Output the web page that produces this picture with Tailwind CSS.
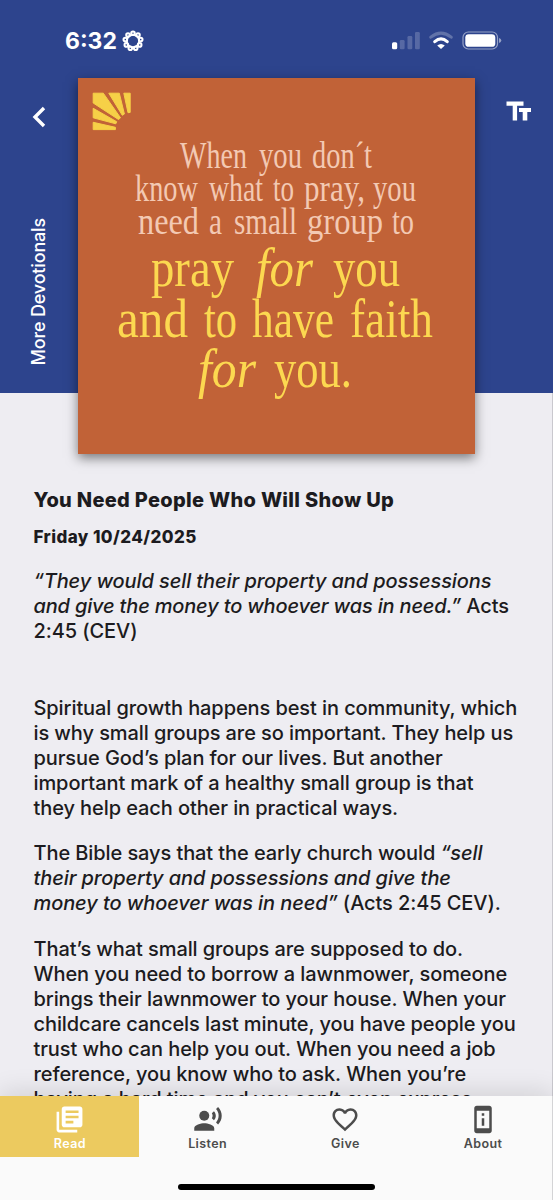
<!DOCTYPE html>
<html lang="en">
<head>
    <meta charset="UTF-8">
    <meta name="viewport" content="width=device-width, initial-scale=1.0">
    <title>Daily Devotional</title>
    <script src="https://cdn.jsdelivr.net/npm/@tailwindcss/browser@4"></script>
</head>
<body class="bg-[#eeedf2] font-['Inter',sans-serif] text-[#1c1b20]">
    <div class="relative w-full h-[1200px] overflow-hidden flex flex-col">

        <!-- Header -->
        <header class="bg-[#2d448d] h-[393px] shrink-0">
            <!-- Status bar -->
            <div class="h-[78px] pt-1 pl-[65px] pr-[51px] flex items-center justify-between text-white">
                <div class="flex items-center gap-[5px]">
                    <span class="text-[23px] leading-none font-bold">6:32</span>
                    <svg class="w-[22px] h-[22px]" viewBox="0 0 22 22" fill="none" stroke="#fff" stroke-width="2">
                        <circle cx="11" cy="11" r="6.2" />
                        <g stroke-width="2">
                            <circle cx="11" cy="3.2" r="1.8" />
                            <circle cx="16" cy="5" r="1.8" />
                            <circle cx="18.7" cy="9.6" r="1.8" />
                            <circle cx="17.7" cy="14.9" r="1.8" />
                            <circle cx="13.7" cy="18.3" r="1.8" />
                            <circle cx="8.3" cy="18.3" r="1.8" />
                            <circle cx="4.3" cy="14.9" r="1.8" />
                            <circle cx="3.3" cy="9.6" r="1.8" />
                            <circle cx="6" cy="5" r="1.8" />
                        </g>
                    </svg>
                </div>
                <svg class="w-[112px] h-[20px]" viewBox="0 0 112 20" fill="#fff">
                    <rect x="2" y="11.2" width="5.2" height="7" rx="1.5" />
                    <g opacity=".2">
                        <rect x="9.8" y="9" width="4.8" height="9.2" rx="1.3" />
                        <rect x="17.5" y="5" width="4.8" height="13.2" rx="1.3" />
                        <rect x="25" y="1" width="4.8" height="17.2" rx="1.3" />
                    </g>
                    <path d="M40.8 6.2 Q51 -2 61.2 6.2" fill="none" stroke="#fff" stroke-opacity=".25" stroke-width="3" stroke-linecap="round" />
                    <path d="M44.8 10.6 Q51 5.2 57.2 10.6" fill="none" stroke="#fff" stroke-width="3.2" stroke-linecap="round" />
                    <path d="M47.2 14.4 Q51 11.4 54.8 14.4 L51 18Z" />
                    <rect x="73" y="1" width="34.5" height="17" rx="5.3" fill="none" stroke="#fff" stroke-opacity=".5" stroke-width="1.2" />
                    <rect x="75.3" y="3.2" width="30" height="12.6" rx="3.4" />
                    <path d="M109 7 Q111.3 7.8 111.3 9.5 T109 12Z" opacity=".5" />
                </svg>
            </div>

            <div class="grid grid-cols-[78px_397px_1fr]">
                <!-- Back and more devotionals -->
                <div class="h-[315px] flex flex-col items-center justify-between pt-[28px] pb-[28px] text-white">
                    <svg class="w-[14px] h-[22px]" viewBox="0 0 14 22" fill="none" stroke="#fff" stroke-width="3.4">
                        <path d="M12 2 L3 11 L12 20" />
                    </svg>
                    <span class="[writing-mode:vertical-rl] rotate-180 whitespace-nowrap text-[18px] leading-[20px] font-medium tracking-[-0.17px]">More Devotionals</span>
                </div>

                <!-- Devotional artwork -->
                <div class="relative z-10 h-[375.5px] bg-[#c16237] shadow-[0_4px_11px_rgba(0,0,0,0.5)]">
                    <svg class="w-[397px] h-[375px]" viewBox="78 78 397 375" font-family="'Liberation Serif', serif">
                        <g fill="#f6d047" stroke="#f6d047" stroke-width="1" stroke-linejoin="round">
                            <path d="M93.2 93.2 H103.3 L120.5 117.8 L118.5 119.5 L93.2 103Z" />
                            <path d="M108.8 93.2 H119.3 L124.4 114 L122.3 115.3Z" />
                            <path d="M123.8 93.2 H130.2 V112.4 L128 112.7Z" />
                            <path d="M93.2 108.3 L116.7 121.7 L115.8 123.8 L93.2 117.8Z" />
                            <path d="M93.2 122.3 L115.4 127.3 V129.6 H93.2Z" />
                        </g>
                        <g fill="#f3c9b3" font-size="37">
                            <text x="180" y="168" textLength="67" lengthAdjust="spacingAndGlyphs">When</text>
                            <text x="259" y="168" textLength="43" lengthAdjust="spacingAndGlyphs">you</text>
                            <text x="312" y="168" textLength="60" lengthAdjust="spacingAndGlyphs">don´t</text>
                            <text x="135" y="201" textLength="63" lengthAdjust="spacingAndGlyphs">know</text>
                            <text x="209" y="201" textLength="54" lengthAdjust="spacingAndGlyphs">what</text>
                            <text x="273" y="201" textLength="21" lengthAdjust="spacingAndGlyphs">to</text>
                            <text x="304" y="201" textLength="61" lengthAdjust="spacingAndGlyphs">pray,</text>
                            <text x="373" y="201" textLength="43" lengthAdjust="spacingAndGlyphs">you</text>
                            <text x="138" y="234" textLength="61" lengthAdjust="spacingAndGlyphs">need</text>
                            <text x="209" y="234" textLength="13" lengthAdjust="spacingAndGlyphs">a</text>
                            <text x="234" y="234" textLength="63" lengthAdjust="spacingAndGlyphs">small</text>
                            <text x="307" y="234" textLength="76" lengthAdjust="spacingAndGlyphs">group</text>
                            <text x="392" y="234" textLength="22" lengthAdjust="spacingAndGlyphs">to</text>
                        </g>
                        <g fill="#fcd850" font-size="54">
                            <text x="151" y="286" textLength="83" lengthAdjust="spacingAndGlyphs">pray</text>
                            <text x="256" y="286" textLength="57" lengthAdjust="spacingAndGlyphs" font-style="italic">for</text>
                            <text x="333" y="286" textLength="67" lengthAdjust="spacingAndGlyphs">you</text>
                            <text x="117" y="337" textLength="71" lengthAdjust="spacingAndGlyphs">and</text>
                            <text x="204" y="337" textLength="33" lengthAdjust="spacingAndGlyphs">to</text>
                            <text x="252" y="337" textLength="82" lengthAdjust="spacingAndGlyphs">have</text>
                            <text x="350" y="337" textLength="83" lengthAdjust="spacingAndGlyphs">faith</text>
                            <text x="198" y="387" textLength="58" lengthAdjust="spacingAndGlyphs" font-style="italic">for</text>
                            <text x="274" y="387" textLength="78" lengthAdjust="spacingAndGlyphs">you.</text>
                        </g>
                    </svg>
                </div>

                <!-- Text size -->
                <div class="pt-[23px] pl-[31px]">
                    <svg class="w-[26px] h-[20px]" viewBox="0 0 26 20" fill="#fff">
                        <path d="M0.5 0.5 H17.5 V4.7 H11.1 V19.5 H6.7 V4.7 H0.5Z" />
                        <path d="M13 7 H25 V11 H21.3 V19.5 H16.7 V11 H13Z" />
                    </svg>
                </div>
            </div>
        </header>

        <!-- Devotional text -->
        <main class="flex-1 min-h-0 overflow-hidden pl-[33.5px] pt-[94px] text-[20px] leading-[25.05px] font-medium tracking-[-0.09px] whitespace-nowrap border-r border-[#c9c8ce]">
            <h1 class="text-[20px] leading-[26px] font-extrabold tracking-[0.31px]">You Need People Who Will Show Up</h1>
            <h2 class="mt-[13px] text-[17px] leading-[22px] font-extrabold tracking-[0.42px]">Friday 10/24/2025</h2>
            <p class="mt-[20.5px]">
                <i>“They would sell their property and possessions</i><br>
                <i class="tracking-[-0.17px]">and give the money to whoever was in need.”</i> Acts<br>
                2:45 (CEV)
            </p>
            <p class="mt-[52.5px]">
                Spiritual growth happens best in community, which<br>
                is why small groups are so important. They help us<br>
                pursue God’s plan for our lives. But another<br>
                important mark of a healthy small group is that<br>
                they help each other in practical ways.
            </p>
            <p class="mt-5">
                The Bible says that the early church would <i>“sell<br>
                their property and possessions and give the<br>
                money to whoever was in need”</i> (Acts 2:45 CEV).
            </p>
            <p class="mt-5">
                That’s what small groups are supposed to do.<br>
                When you need to borrow a lawnmower, someone<br>
                brings their lawnmower to your house. When your<br>
                childcare cancels last minute, you have people you<br>
                trust who can help you out. When you need a job<br>
                reference, you know who to ask. When you’re<br>
                having a hard time and you can’t even express
            </p>
        </main>

        <!-- Bottom navigation -->
        <footer class="h-[104.5px] shrink-0 bg-[#fafafa] shadow-[0_-4px_24px_rgba(0,0,0,0.12)] flex flex-col items-center justify-between pb-[10px] border-r border-[#d4d4d6]">
            <nav class="w-full grid grid-cols-4 pl-px text-[12.5px] leading-4 font-semibold tracking-[0.4px] text-[#4c4c4c]">
                <a class="h-[61.5px] -ml-px pl-px bg-[#ecca5f] text-white flex flex-col items-center pt-[8px]">
                    <svg class="w-[31px] h-[31px]" viewBox="0 0 24 24" fill="currentColor">
                        <path d="M4 6H2v14c0 1.1.9 2 2 2h14v-2H4V6zm16-4H8c-1.1 0-2 .9-2 2v12c0 1.1.9 2 2 2h12c1.1 0 2-.9 2-2V4c0-1.1-.9-2-2-2zm-1 9H9V9h10v2zm-4 4H9v-2h6v2zm4-8H9V5h10v2z" />
                    </svg>
                    <span class="mt-px">Read</span>
                </a>
                <a class="h-[61.5px] flex flex-col items-center pt-[8px]">
                    <svg class="w-[30px] h-[31px]" viewBox="0 0 24 24" fill="currentColor">
                        <circle cx="9" cy="9" r="4" />
                        <path d="M9 15c-2.67 0-8 1.34-8 4v2h16v-2c0-2.66-5.33-4-8-4zm7.76-9.64l-1.68 1.69c.84 1.18.84 2.71 0 3.89l1.68 1.69c2.02-2.02 2.02-5.07 0-7.27zM20.07 2l-1.63 1.63c2.77 3.02 2.77 7.56 0 10.74L20.07 16c3.9-3.89 3.91-9.95 0-14z" />
                    </svg>
                    <span class="mt-px">Listen</span>
                </a>
                <a class="h-[61.5px] flex flex-col items-center pt-[8px]">
                    <svg class="w-[30px] h-[31px]" viewBox="0 0 24 24" fill="currentColor">
                        <path d="M16.5 3c-1.74 0-3.41.81-4.5 2.09C10.91 3.81 9.24 3 7.5 3 4.42 3 2 5.42 2 8.5c0 3.78 3.4 6.86 8.55 11.54L12 21.35l1.45-1.32C18.6 15.36 22 12.28 22 8.5 22 5.42 19.58 3 16.5 3zm-4.4 15.55l-.1.1-.1-.1C7.14 14.24 4 11.39 4 8.5 4 6.5 5.5 5 7.5 5c1.54 0 3.04.99 3.57 2.36h1.87C13.46 5.99 14.96 5 16.5 5c2 0 3.5 1.5 3.5 3.5 0 2.89-3.14 5.74-7.9 10.05z" />
                    </svg>
                    <span class="mt-px">Give</span>
                </a>
                <a class="h-[61.5px] flex flex-col items-center pt-[8px]">
                    <svg class="w-[30px] h-[31px]" viewBox="0 0 24 24" fill="currentColor">
                        <path d="M13 7h-2v2h2V7zm0 4h-2v6h2v-6zm4-9.99L7 1c-1.1 0-2 .9-2 2v18c0 1.1.9 2 2 2h10c1.1 0 2-.9 2-2V3c0-1.1-.9-1.99-2-1.99zM17 19H7V5h10v14z" />
                    </svg>
                    <span class="mt-px">About</span>
                </a>
            </nav>
            <div class="w-[197px] h-[6px] rounded-full bg-black"></div>
        </footer>
    </div>
</body>
</html>
